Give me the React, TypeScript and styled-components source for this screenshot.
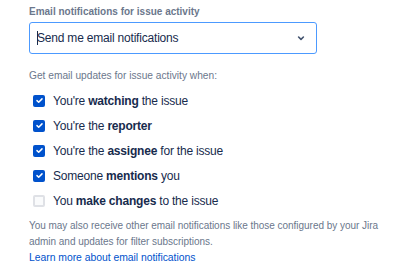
import React from 'react';
import styled, { createGlobalStyle } from 'styled-components';

const GlobalStyle = createGlobalStyle`
  body {
    margin: 0;
    background: #ffffff;
    font-family: 'Liberation Sans', Arial, sans-serif;
    color: #172b4d;
  }
`;

interface IOption {
  before: string;
  bold: string;
  after: string;
  checked: boolean;
}

const options: IOption[] = [
  { before: "You're ", bold: 'watching', after: ' the issue', checked: true },
  { before: "You're the ", bold: 'reporter', after: '', checked: true },
  { before: "You're the ", bold: 'assignee', after: ' for the issue', checked: true },
  { before: 'Someone ', bold: 'mentions', after: ' you', checked: true },
  { before: 'You ', bold: 'make changes', after: ' to the issue', checked: false },
];

const Page = styled.div`
  width: 417px;
  height: 273px;
  box-sizing: border-box;
  padding: 4px 0 0 29px;
`;

const FieldLabel = styled.div`
  font-size: 10px;
  font-weight: bold;
  line-height: 16px;
  color: #6b778c;
`;

const SelectBox = styled.div`
  margin-top: 2px;
  width: 288px;
  height: 32px;
  box-sizing: border-box;
  border: 1.5px solid #4c9aff;
  border-radius: 3px;
  display: flex;
  align-items: center;
  padding: 0 9px 0 7px;
`;

const Caret = styled.span`
  width: 1px;
  height: 14px;
  background: #172b4d;
  margin-right: -1px;
`;

const SelectValue = styled.span`
  flex: 1;
  font-size: 12px;
  letter-spacing: -0.2px;
  color: #172b4d;
`;

const Hint = styled.div`
  margin-top: 14px;
  font-size: 10.2px;
  line-height: 16px;
  color: #6b778c;
`;

const List = styled.div`
  margin-top: 4px;
  display: flex;
  flex-direction: column;
`;

const Row = styled.label`
  display: flex;
  align-items: center;
  height: 25px;
  padding-left: 4px;
  font-size: 12px;
  letter-spacing: -0.2px;
  color: #172b4d;
  gap: 8px;
`;

const Box = styled.span<{ $checked: boolean }>`
  width: 12px;
  height: 12px;
  box-sizing: border-box;
  border-radius: 2px;
  display: flex;
  align-items: center;
  justify-content: center;
  background: ${(p) => (p.$checked ? '#0052cc' : '#fafbfc')};
  border: ${(p) => (p.$checked ? 'none' : '2px solid #dfe1e6')};
`;

const Note = styled.div`
  margin-top: 5px;
  width: 388px;
  font-size: 10px;
  letter-spacing: -0.03px;
  line-height: 16px;
  color: #6b778c;
`;

const Link = styled.a`
  display: block;
  font-size: 10.4px;
  color: #0052cc;
  text-decoration: none;
  font-weight: 500;
`;

const Chevron = () => (
  <svg width="12" height="12" viewBox="0 0 12 12">
    <path d="M3.6 5l2.4 2.3L8.4 5" fill="none" stroke="#42526e" strokeWidth="1.6" strokeLinecap="round" strokeLinejoin="round" />
  </svg>
);

const Tick = () => (
  <svg width="9" height="9" viewBox="0 0 9 9">
    <path d="M2 4.6l1.7 1.6L7 2.9" fill="none" stroke="#ffffff" strokeWidth="1.5" strokeLinecap="round" strokeLinejoin="round" />
  </svg>
);

const App = () => {
  return (
    <Page>
      <GlobalStyle />
      <FieldLabel>Email notifications for issue activity</FieldLabel>
      <SelectBox>
        <Caret />
        <SelectValue>Send me email notifications</SelectValue>
        <Chevron />
      </SelectBox>
      <Hint>Get email updates for issue activity when:</Hint>
      <List>
        {options.map((o) => (
          <Row key={o.bold}>
            <Box $checked={o.checked}>{o.checked && <Tick />}</Box>
            <span>
              {o.before}
              <b>{o.bold}</b>
              {o.after}
            </span>
          </Row>
        ))}
      </List>
      <Note>
        You may also receive other email notifications like those configured by your Jira
        <br />
        admin and updates for filter subscriptions.
        <Link href="#">Learn more about email notifications</Link>
      </Note>
    </Page>
  );
};

export default App;
